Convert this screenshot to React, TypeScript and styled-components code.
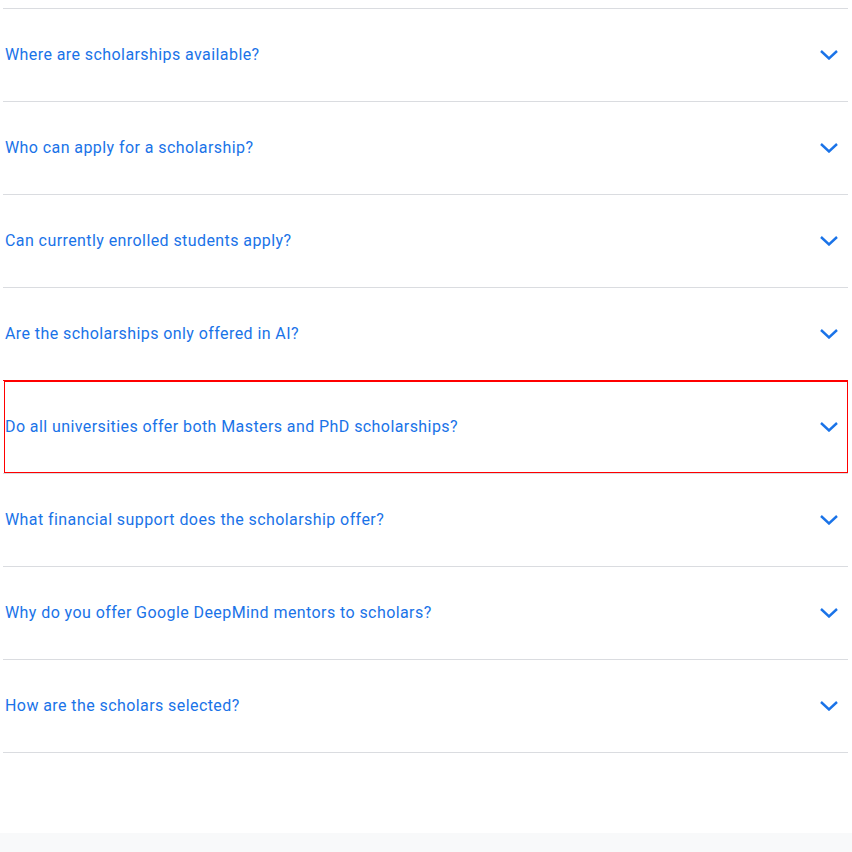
import React from "react";
import styled, { createGlobalStyle } from "styled-components";

const Global = createGlobalStyle`
  html, body { margin: 0; padding: 0; background: #ffffff; }
  body { font-family: Roboto, "Noto Sans", Arial, sans-serif; }
`;

const Page = styled.div`
  display: flex;
  flex-direction: column;
  min-height: 852px;
`;

const List = styled.ul`
  list-style: none;
  margin: 8px 4px 0 3px;
  padding: 0;
  border-bottom: 1px solid #dadce0;
`;

const Item = styled.li<{ $highlight?: boolean }>`
  border-top: 1px solid #dadce0;
  height: 92px;
  display: flex;
  align-items: center;
  justify-content: space-between;
  padding: 0 10px 0 2px;
  ${(p) =>
    p.$highlight
      ? "box-shadow: inset 1px 0 0 #ffffff, inset 2px 0 0 #ff0000, inset -1px 0 0 #ff0000, inset 0 1px 0 #ff0000, inset 0 -1px 0 #ff0000; border-top-color: #ff0000;"
      : ""}
`;

const Question = styled.span`
  color: #1a73e8;
  font-size: 16px;
  line-height: 24px;
  letter-spacing: 0.42px;
`;

const Chevron = styled.svg`
  width: 18px;
  height: 10px;
  flex: none;
`;

const Spacer = styled.div`
  height: 80px;
`;

const Footer = styled.div`
  flex: 1;
  background: #f8f9fa;
`;

const questions = [
  "Where are scholarships available?",
  "Who can apply for a scholarship?",
  "Can currently enrolled students apply?",
  "Are the scholarships only offered in AI?",
  "Do all universities offer both Masters and PhD scholarships?",
  "What financial support does the scholarship offer?",
  "Why do you offer Google DeepMind mentors to scholars?",
  "How are the scholars selected?",
];

export default function App() {
  return (
    <Page>
      <Global />
      <List>
        {questions.map((q, i) => (
          <Item key={q} $highlight={i === 4}>
            <Question>{q}</Question>
            <Chevron viewBox="0 0 18 10" aria-hidden="true">
              <polyline
                points="1,1 9,8.5 17,1"
                fill="none"
                stroke="#1a73e8"
                strokeWidth="2.4"
              />
            </Chevron>
          </Item>
        ))}
      </List>
      <Spacer />
      <Footer />
    </Page>
  );
}
